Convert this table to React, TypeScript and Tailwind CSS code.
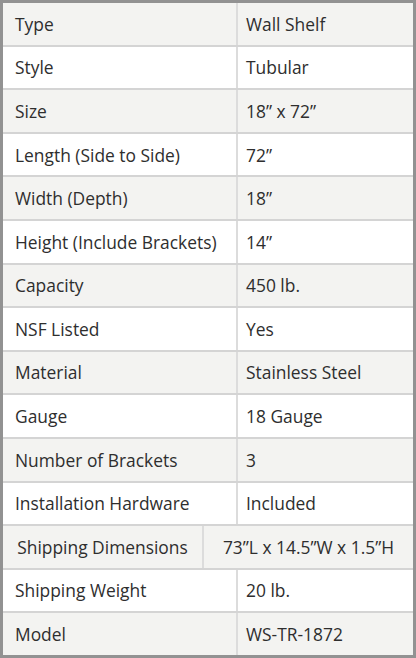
import React from 'react';

const rows: [string, string][] = [
  ['Type', 'Wall Shelf'],
  ['Style', 'Tubular'],
  ['Size', '18” x 72”'],
  ['Length (Side to Side)', '72”'],
  ['Width (Depth)', '18”'],
  ['Height (Include Brackets)', '14”'],
  ['Capacity', '450 lb.'],
  ['NSF Listed', 'Yes'],
  ['Material', 'Stainless Steel'],
  ['Gauge', '18 Gauge'],
  ['Number of Brackets', '3'],
  ['Installation Hardware', 'Included'],
  ['Shipping Dimensions', '73”L x 14.5”W x 1.5”H'],
  ['Shipping Weight', '20 lb.'],
  ['Model', 'WS-TR-1872'],
];

export default function App() {
  return (
    <div
      className="w-[416px] h-[658px] border-[3px] border-[#929292] flex flex-col bg-white text-[#2e2e2e] text-[17.4px]"
      style={{ fontFamily: '"Open Sans", "Liberation Sans", sans-serif' }}
    >
      {rows.map(([label, value], i) => {
        const shaded = i % 2 === 0;
        const wide = label === 'Shipping Dimensions';
        return (
          <div
            key={label}
            className={`flex-1 flex ${i > 0 ? 'border-t-2 border-[#d4d4d4]' : ''} ${shaded ? 'bg-[#f3f3f1]' : 'bg-white'}`}
          >
            {wide ? (
              <>
                <div className="w-[201px] flex items-center justify-center border-r-2 border-[#dcdcdc]">{label}</div>
                <div className="flex-1 flex items-center justify-center">{value}</div>
              </>
            ) : (
              <>
                <div className="w-[235px] flex items-center pl-3 border-r-2 border-[#dcdcdc]">{label}</div>
                <div className="flex-1 flex items-center pl-[8px]">{value}</div>
              </>
            )}
          </div>
        );
      })}
    </div>
  );
}
